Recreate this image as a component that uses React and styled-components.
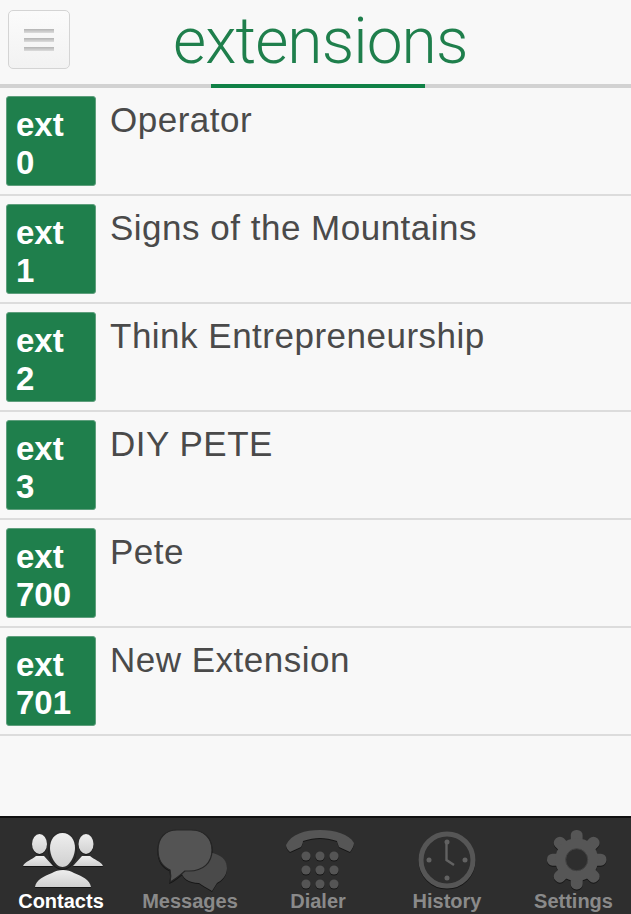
import React from 'react'
import styled, { createGlobalStyle } from 'styled-components'

const GlobalStyle = createGlobalStyle`
  html, body { margin: 0; padding: 0; background: #f8f8f8; }
  * { box-sizing: border-box; }
`

const extensions = [
  { ext: '0', name: 'Operator' },
  { ext: '1', name: 'Signs of the Mountains' },
  { ext: '2', name: 'Think Entrepreneurship' },
  { ext: '3', name: 'DIY PETE' },
  { ext: '700', name: 'Pete' },
  { ext: '701', name: 'New Extension' },
]

const ContactsIcon = () => (
  <svg width="90" height="64" viewBox="0 0 90 64">
    <defs>
      <linearGradient id="contactsFill" x1="0" y1="0" x2="0" y2="1">
        <stop offset="0" stopColor="#eeeeee" />
        <stop offset="1" stopColor="#d0d0d0" />
      </linearGradient>
    </defs>
    <g fill="url(#contactsFill)">
      <ellipse cx="23.5" cy="16" rx="7.5" ry="10" />
      <ellipse cx="70" cy="16" rx="7.5" ry="10" />
      <path d="M7 38C9 33 16 32 20 28h8l9 10z" />
      <path d="M87 38C85 33 78 32 74 28h-8l-9 10z" />
    </g>
    <ellipse cx="46.5" cy="22" rx="14" ry="19" fill="#2a2a2a" />
    <path d="M46.5 5c8 0 12.5 7 12.5 15c0 8-5.500 19-12.500 19s-12.500-11-12.500-19c0-8 4.500-15 12.500-15z" fill="url(#contactsFill)" />
    <path d="M19 59C20 52 28 48 36 45C42 41 52 41 58 45C66 48 74 52 75 59z" fill="url(#contactsFill)" />
  </svg>
)

const MessagesIcon = () => (
  <svg width="90" height="64" viewBox="0 0 90 64">
    <path d="M58 24c7 0 24 2 24 16c0 8-6 13-10 15l-5 8c-5-3-10-6-13-8c-10 0-18-5-18-14c0-10 10-17 22-17z" fill="#4a4a4a" />
    <path d="M32 2h14c13 0 21 8 21 20c0 13-9 21-23 21h-4c-6 5-9 8-15 11c1-4 1-8 0-12c-7-3-12-10-12-20c0-12 7-20 19-20z" fill="#545454" stroke="#262626" strokeWidth="1.2" />
  </svg>
)

const dialerDots = [28, 42, 56].flatMap(y => [33, 47, 61].map(x => ({ x, y })))

const DialerIcon = () => (
  <svg width="90" height="64" viewBox="0 0 90 64">
    <path d="M13 17C18 6 32 2 47 2S76 6 81 15C81 18 79 21 77 24L66 19C65 16 64 14 64 13C58 11 52 10 47 10S36 11 30 13C30 15 29 17 28 19L17 24C15 22 13 20 13 17z" fill="#565656" />
    {dialerDots.map(d => (
      <circle key={`${d.x}-${d.y}`} cx={d.x} cy={d.y} r="4.6" fill="#555" />
    ))}
  </svg>
)

const HistoryIcon = () => (
  <svg width="90" height="64" viewBox="0 0 90 64">
    <circle cx="45" cy="32" r="26" fill="#2e2e2e" stroke="#565656" strokeWidth="5" />
    <g fill="#626262">
      <circle cx="45" cy="14" r="2.5" />
      <circle cx="45" cy="50" r="2.5" />
      <circle cx="27" cy="32" r="2.5" />
      <circle cx="63" cy="32" r="2.5" />
    </g>
    <path d="M44.500 16v16l7.500 5" fill="none" stroke="#626262" strokeWidth="2.400" />
  </svg>
)

const gearTeeth = [0, 45, 90, 135, 180, 225, 270, 315]

const SettingsIcon = () => (
  <svg width="90" height="64" viewBox="0 0 90 64">
    <g fill="#565656">
      {gearTeeth.map(a => (
        <rect key={a} x="41.700" y="2" width="12" height="16" rx="5.500" transform={`rotate(${a} 47.7 31.7)`} />
      ))}
      <circle cx="47.7" cy="31.7" r="21.500" />
    </g>
    <circle cx="47.7" cy="31.7" r="11" fill="#2e2e2e" stroke="#444" strokeWidth="1" />
  </svg>
)

const tabs = [
  { label: 'Contacts', Icon: ContactsIcon, active: true },
  { label: 'Messages', Icon: MessagesIcon },
  { label: 'Dialer', Icon: DialerIcon },
  { label: 'History', Icon: HistoryIcon },
  { label: 'Settings', Icon: SettingsIcon },
]

export default function App() {
  return (
    <Page>
      <GlobalStyle />
      <Header>
        <MenuButton>
          <MenuLine />
          <MenuLine />
          <MenuLine />
        </MenuButton>
        <Title>extensions</Title>
      </Header>
      <HeaderRule>
        <RuleGrey />
        <RuleGreen />
        <RuleGrey />
      </HeaderRule>
      <List>
        {extensions.map(item => (
          <Row key={item.ext}>
            <Badge>
              ext
              <br />
              {item.ext}
            </Badge>
            <Name>{item.name}</Name>
          </Row>
        ))}
      </List>
      <TabBar>
        {tabs.map(({ label, Icon, active }) => (
          <Tab key={label}>
            <Icon />
            <TabLabel $active={active}>{label}</TabLabel>
          </Tab>
        ))}
      </TabBar>
    </Page>
  )
}

const Page = styled.div`
  width: 631px;
  height: 914px;
  display: flex;
  flex-direction: column;
  background: #f8f8f8;
  font-family: "Liberation Sans", Arial, sans-serif;
  overflow: hidden;
`

const Header = styled.header`
  height: 84px;
  display: flex;
  align-items: flex-start;
  padding: 10px 0 0 8px;
`

const MenuButton = styled.div`
  width: 62px;
  height: 59px;
  flex: none;
  display: flex;
  flex-direction: column;
  align-items: center;
  justify-content: center;
  gap: 5px;
  border: 1px solid #d4d4d4;
  border-radius: 5px;
  background: linear-gradient(#fbfbfb, #f2f2f2);
`

const MenuLine = styled.span`
  width: 30px;
  height: 4px;
  background: linear-gradient(#b4b4b4, #dcdcdc);
`

const Title = styled.h1`
  margin: -6px 0 0 103px;
  font-family: Roboto, "Liberation Sans", sans-serif;
  font-weight: 300;
  font-size: 64px;
  line-height: 76px;
  letter-spacing: -0.9px;
  color: #1f7f4c;
`

const HeaderRule = styled.div`
  height: 4px;
  flex: none;
  display: flex;
`

const RuleGrey = styled.div`
  flex: 1;
  background: #d2d2d2;
  &:first-child { flex: none; width: 211px; }
`

const RuleGreen = styled.div`
  width: 214px;
  background: #108146;
`

const List = styled.div`
  flex: 1;
  display: flex;
  flex-direction: column;
`

const Row = styled.div`
  height: 108px;
  flex: none;
  display: flex;
  gap: 14px;
  padding: 8px 6px 0;
  border-bottom: 2px solid #dcdcdc;
`

const Badge = styled.div`
  width: 90px;
  height: 90px;
  flex: none;
  padding: 9px 0 0 9px;
  border: 1px solid #5f9f7d;
  border-radius: 3px;
  background: #1f7f4c;
  color: #fff;
  font-weight: 700;
  font-size: 33px;
  line-height: 38px;
`

const Name = styled.div`
  margin-top: 4px;
  font-size: 35px;
  line-height: 40px;
  letter-spacing: 0.5px;
  color: #4a4a4a;
`

const TabBar = styled.nav`
  height: 98px;
  flex: none;
  display: grid;
  grid-template-columns: 122px 136px 120px 138px 115px;
  padding-top: 10px;
  background: #2e2e2e;
  border-top: 2px solid #111;
`

const Tab = styled.div`
  display: flex;
  flex-direction: column;
  align-items: center;
  svg { display: block; filter: drop-shadow(0 1px 0 #161616); }
`

const TabLabel = styled.span`
  margin-top: -2px;
  font-weight: 700;
  font-size: 20px;
  line-height: 22px;
  white-space: nowrap;
  color: ${({ $active }) => ($active ? '#fff' : '#8a8a8a')};
`
